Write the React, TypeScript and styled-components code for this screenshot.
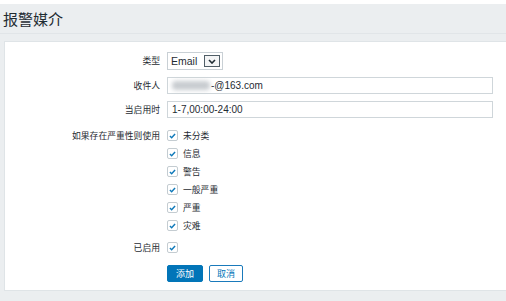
import * as React from 'react'
import styled, { createGlobalStyle } from 'styled-components'

const GlobalStyle = createGlobalStyle`
  html, body {
    margin: 0;
    padding: 0;
    background: #ffffff;
  }
  body {
    font-family: "Liberation Sans", Arial, "Noto Sans CJK SC", sans-serif;
    font-size: 10px;
    color: #1f2c33;
  }
`

const Page = styled.div`
  margin-top: 4px;
  background: #ebeef0;
  height: 297px;
  overflow: hidden;
`

const Header = styled.div`
  height: 29px;
  border-bottom: 1px solid #e1e5e8;
  display: flex;
  align-items: center;
  padding-left: 3px;
`

const Title = styled.h1`
  margin: 0;
  font-family: "Noto Sans CJK SC", sans-serif;
  font-weight: 400;
  font-size: 15px;
  color: #1f2c33;
`

const Panel = styled.div`
  margin: 7px 0 0 4px;
  background: #ffffff;
  border: 1px solid #dfe4e7;
  border-right: none;
  height: 250px;
  padding-top: 10px;
  box-sizing: border-box;
`

const Form = styled.div`
  display: grid;
  grid-template-columns: 155px 326px;
  column-gap: 7px;
  align-items: start;
`

const Label = styled.div`
  text-align: right;
  font-family: "Noto Sans CJK SC", sans-serif;
  font-size: 8.8px;
  line-height: 17px;
  color: #1f2c33;
`

const Cell = styled.div<{ $bottom?: number }>`
  margin-bottom: ${p => p.$bottom ?? 7}px;
`

const Select = styled.div`
  width: 56px;
  height: 18px;
  box-sizing: border-box;
  border: 1px solid #c9d0d5;
  display: flex;
  align-items: center;
  justify-content: space-between;
  padding: 0 2px 0 3px;
  font-size: 10.5px;
`

const Arrow = styled.span`
  width: 16px;
  height: 12px;
  border: 1px solid #4f5d66;
  box-sizing: border-box;
  display: flex;
  align-items: center;
  justify-content: center;
  background: #f3f4f5;
`

const Input = styled.div`
  width: 326px;
  height: 17px;
  box-sizing: border-box;
  border: 1px solid #cfd6da;
  display: flex;
  align-items: center;
  padding-left: 4px;
  font-size: 10px;
  color: #1f2c33;
`

const Blur = styled.span`
  display: inline-block;
  width: 38px;
  height: 9px;
  margin-right: 1px;
  border-radius: 4px;
  background: #c8ccd0;
  filter: blur(2px);
`

const List = styled.div`
  display: flex;
  flex-direction: column;
  gap: 7px;
  padding-top: 3px;
`

const Item = styled.label`
  display: flex;
  align-items: center;
  gap: 5px;
  height: 11px;
  font-family: "Noto Sans CJK SC", sans-serif;
  font-size: 8.8px;
`

const Box = styled.span`
  width: 11px;
  height: 11px;
  box-sizing: border-box;
  border: 1px solid #c4ccd1;
  border-radius: 2px;
  display: flex;
  align-items: center;
  justify-content: center;
`

const Buttons = styled.div`
  display: flex;
  gap: 6px;
`

const Button = styled.button<{ $primary?: boolean }>`
  height: 17px;
  box-sizing: border-box;
  padding: 0;
  width: ${p => (p.$primary ? 36 : 34)}px;
  font-family: "Noto Sans CJK SC", sans-serif;
  font-size: 9px;
  line-height: 1;
  border-radius: 2px;
  cursor: pointer;
  border: 1px solid ${p => (p.$primary ? '#0275b8' : '#1a7abb')};
  background: ${p => (p.$primary ? '#0275b8' : '#ffffff')};
  color: ${p => (p.$primary ? '#ffffff' : '#0275b8')};
`

const Check = () => (
  <Box>
    <svg width="7" height="6" viewBox="0 0 8 7">
      <path d="M1 3.6 L3 5.5 L7 1.2" fill="none" stroke="#0f79ba" strokeWidth="1.7" />
    </svg>
  </Box>
)

const severities = ['未分类', '信息', '警告', '一般严重', '严重', '灾难']

export default function App() {
  return (
    <>
      <GlobalStyle />
      <Page>
        <Header>
          <Title>报警媒介</Title>
        </Header>
        <Panel>
          <Form>
            <Label>类型</Label>
            <Cell $bottom={7}>
              <Select>
                Email
                <Arrow>
                  <svg width="8" height="5" viewBox="0 0 8 5">
                    <path d="M1 1 L4 4 L7 1" fill="none" stroke="#1f2c33" strokeWidth="1.6" />
                  </svg>
                </Arrow>
              </Select>
            </Cell>
            <Label>收件人</Label>
            <Cell>
              <Input>
                <Blur />
                -@163.com
              </Input>
            </Cell>
            <Label>当启用时</Label>
            <Cell $bottom={9}>
              <Input>1-7,00:00-24:00</Input>
            </Cell>
            <Label>如果存在严重性则使用</Label>
            <Cell $bottom={8}>
              <List>
                {severities.map(s => (
                  <Item key={s}>
                    <Check />
                    {s}
                  </Item>
                ))}
              </List>
            </Cell>
            <Label>已启用</Label>
            <Cell $bottom={9}>
              <Item style={{ height: 17 }}>
                <Check />
              </Item>
            </Cell>
            <div />
            <Buttons>
              <Button $primary>添加</Button>
              <Button>取消</Button>
            </Buttons>
          </Form>
        </Panel>
      </Page>
    </>
  )
}
